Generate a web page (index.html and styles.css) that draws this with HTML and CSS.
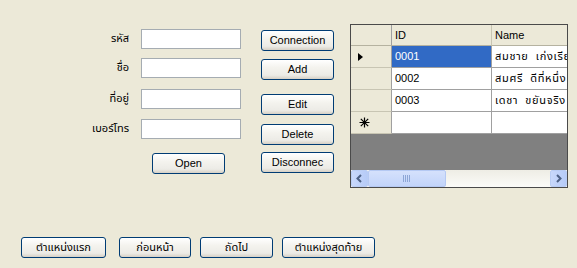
FILE: index.html
```html
<!DOCTYPE html>
<html>
<head>
<meta charset="utf-8">
<link rel="stylesheet" href="styles.css">
</head>
<body>
<div class="window">
  <div class="top">
    <div class="form">
      <label class="lbl">รหัส</label><input class="tb" type="text">
      <label class="lbl">ชื่อ</label><input class="tb" type="text">
      <label class="lbl">ที่อยู่</label><input class="tb" type="text">
      <label class="lbl">เบอร์โทร</label><input class="tb" type="text">
      <span></span><button class="btn btn-open">Open</button>
    </div>
    <div class="actions">
      <button class="btn">Connection</button>
      <button class="btn act-add">Add</button>
      <button class="btn act-edit">Edit</button>
      <button class="btn act-delete">Delete</button>
      <button class="btn act-disc">Disconnec</button>
    </div>
    <div class="dgv">
      <div class="dgv-table">
        <div class="hc corner"></div>
        <div class="hc">ID</div>
        <div class="hc">Name</div>

        <div class="rh"><span class="tri"></span></div>
        <div class="cell sel">0001</div>
        <div class="cell thai cell-thai">สมชาย&nbsp; เก่งเรียน</div>

        <div class="rh"></div>
        <div class="cell">0002</div>
        <div class="cell thai cell-thai">สมศรี&nbsp; ดีที่หนึ่ง</div>

        <div class="rh"></div>
        <div class="cell">0003</div>
        <div class="cell thai cell-thai">เดชา&nbsp; ขยันจริง</div>

        <div class="rh"><svg class="star" width="11" height="11" viewBox="0 0 11 11"><path d="M5.5 0.5v10M0.5 5.5h10M1.8 1.8l7.4 7.4M9.2 1.8l-7.4 7.4" stroke="#000" stroke-width="1.2"/></svg></div>
        <div class="cell"></div>
        <div class="cell"></div>
      </div>
      <div class="dgv-empty"></div>
      <div class="hscroll">
        <div class="sb-btn"><svg width="15" height="15" viewBox="0 0 15 15"><path d="M9 4l-3.5 3.5L9 11" fill="none" stroke="#4d6185" stroke-width="2"/></svg></div>
        <div class="sb-thumb"><svg width="8" height="7" viewBox="0 0 8 7"><path d="M0.5 0v7M2.5 0v7M4.5 0v7M6.5 0v7" stroke="#8da6d6" stroke-width="1"/></svg></div>
        <div class="sb-track"></div>
        <div class="sb-btn"><svg width="15" height="15" viewBox="0 0 15 15"><path d="M6 4l3.5 3.5L6 11" fill="none" stroke="#4d6185" stroke-width="2"/></svg></div>
      </div>
    </div>
  </div>
  <div class="nav">
    <button class="btn thai nav-first">ตำแหน่งแรก</button>
    <button class="btn thai nav-prev">ก่อนหน้า</button>
    <button class="btn thai nav-next">ถัดไป</button>
    <button class="btn thai nav-last">ตำแหน่งสุดท้าย</button>
  </div>
</div>
</body>
</html>
```

FILE: styles.css
```css
html, body {
  margin: 0;
  padding: 0;
}
body {
  width: 577px;
  height: 268px;
  background: #ece9d8;
  font-family: "Liberation Sans", "Noto Sans Thai", "Noto Sans", sans-serif;
  font-size: 11px;
  color: #000;
  overflow: hidden;
}
.window {
  display: flex;
  flex-direction: column;
}
.top {
  display: flex;
  height: 237px;
}
.form {
  display: grid;
  grid-template-columns: 129px 100px;
  column-gap: 12px;
  grid-template-rows: 29px 31px 30px 34px 21px;
  align-items: start;
  padding-top: 29px;
  height: max-content;
}
.lbl {
  text-align: right;
  height: 20px;
  line-height: 20px;
  font-family: "Noto Sans Thai", "Liberation Sans", sans-serif;
  font-size: 11px;
}
.tb {
  box-sizing: border-box;
  width: 100px;
  height: 20px;
  margin: 0;
  border: 1px solid #a5acb2;
  background: #fff;
  padding: 0 2px;
}
.btn {
  box-sizing: border-box;
  width: 73px;
  height: 21px;
  margin: 0;
  padding: 0;
  border: 1px solid #003c74;
  border-radius: 3px;
  background: linear-gradient(#ffffff 0%, #f4f3ee 40%, #ecebe6 80%, #d6d0c5 100%);
  font-family: "Liberation Sans", "Noto Sans Thai", sans-serif;
  font-size: 11px;
  color: #000;
  line-height: 19px;
  text-align: center;
}
.btn-open {
  margin-left: 11px;
}
.actions {
  display: flex;
  flex-direction: column;
  margin-left: 20px;
  padding-top: 30px;
}
.act-add { margin-top: 8px; }
.act-edit { margin-top: 14px; }
.act-delete { margin-top: 9px; }
.act-disc { margin-top: 7px; }

.dgv {
  box-sizing: border-box;
  margin-left: 16px;
  margin-top: 24px;
  width: 218px;
  height: 164px;
  border: 1px solid #4a4a4a;
  background: #808080;
  overflow: hidden;
  display: flex;
  flex-direction: column;
}
.dgv-table {
  display: grid;
  grid-template-columns: 41px 100px 100px;
  grid-template-rows: 21px 22px 22px 22px 22px;
  width: 241px;
  flex: none;
}
.hc, .rh, .cell {
  box-sizing: border-box;
  border-right: 1px solid #a0a0a0;
  border-bottom: 1px solid #a0a0a0;
  white-space: nowrap;
  overflow: hidden;
}
.hc {
  background: #ece9d8;
  padding-left: 3px;
  line-height: 20px;
  border-right-color: #c8c5b3;
  border-bottom-color: #b5b2a0;
}
.hc.corner {
  border-right-color: #a0a0a0;
}
.rh {
  background: #ece9d8;
  border-right-color: #a0a0a0;
  border-bottom-color: #c8c5b3;
  display: flex;
  align-items: center;
  padding-left: 6px;
}
.cell {
  background: #fff;
  padding-left: 3px;
  line-height: 21px;
}
.cell.sel {
  background: #316ac5;
  color: #fff;
}
.thai {
  font-family: "Noto Sans Thai", "Liberation Sans", sans-serif;
  font-size: 11px;
}
.cell-thai {
  letter-spacing: 0.7px;
}
.tri {
  width: 0;
  height: 0;
  border-top: 4px solid transparent;
  border-bottom: 4px solid transparent;
  border-left: 5px solid #000;
  margin-left: 1px;
}
.star {
  display: block;
  margin-left: 2px;
}
.dgv-empty {
  flex: 1;
  background: #808080;
}
.hscroll {
  height: 17px;
  flex: none;
  display: flex;
  background: #f5f4ef;
}
.sb-btn {
  box-sizing: border-box;
  width: 17px;
  height: 17px;
  border: 1px solid #b9cdf4;
  border-radius: 2px;
  background: linear-gradient(90deg, #c8d8fb, #b6cbf7);
  display: flex;
  align-items: center;
  justify-content: center;
}
.sb-thumb {
  box-sizing: border-box;
  width: 78px;
  height: 17px;
  border: 1px solid #b5c9f3;
  border-radius: 2px;
  background: linear-gradient(#d5e1fc, #c2d4fa);
  display: flex;
  align-items: center;
  justify-content: center;
}
.sb-track {
  flex: 1;
  background: linear-gradient(#eeede5, #fbfbf8);
}
.nav {
  display: flex;
  gap: 9px;
  padding-left: 21px;
}
.nav-first { width: 85px; margin-right: 4px; }
.nav-prev { width: 72px; }
.nav-next { width: 73px; }
.nav-last { width: 93px; }
```
